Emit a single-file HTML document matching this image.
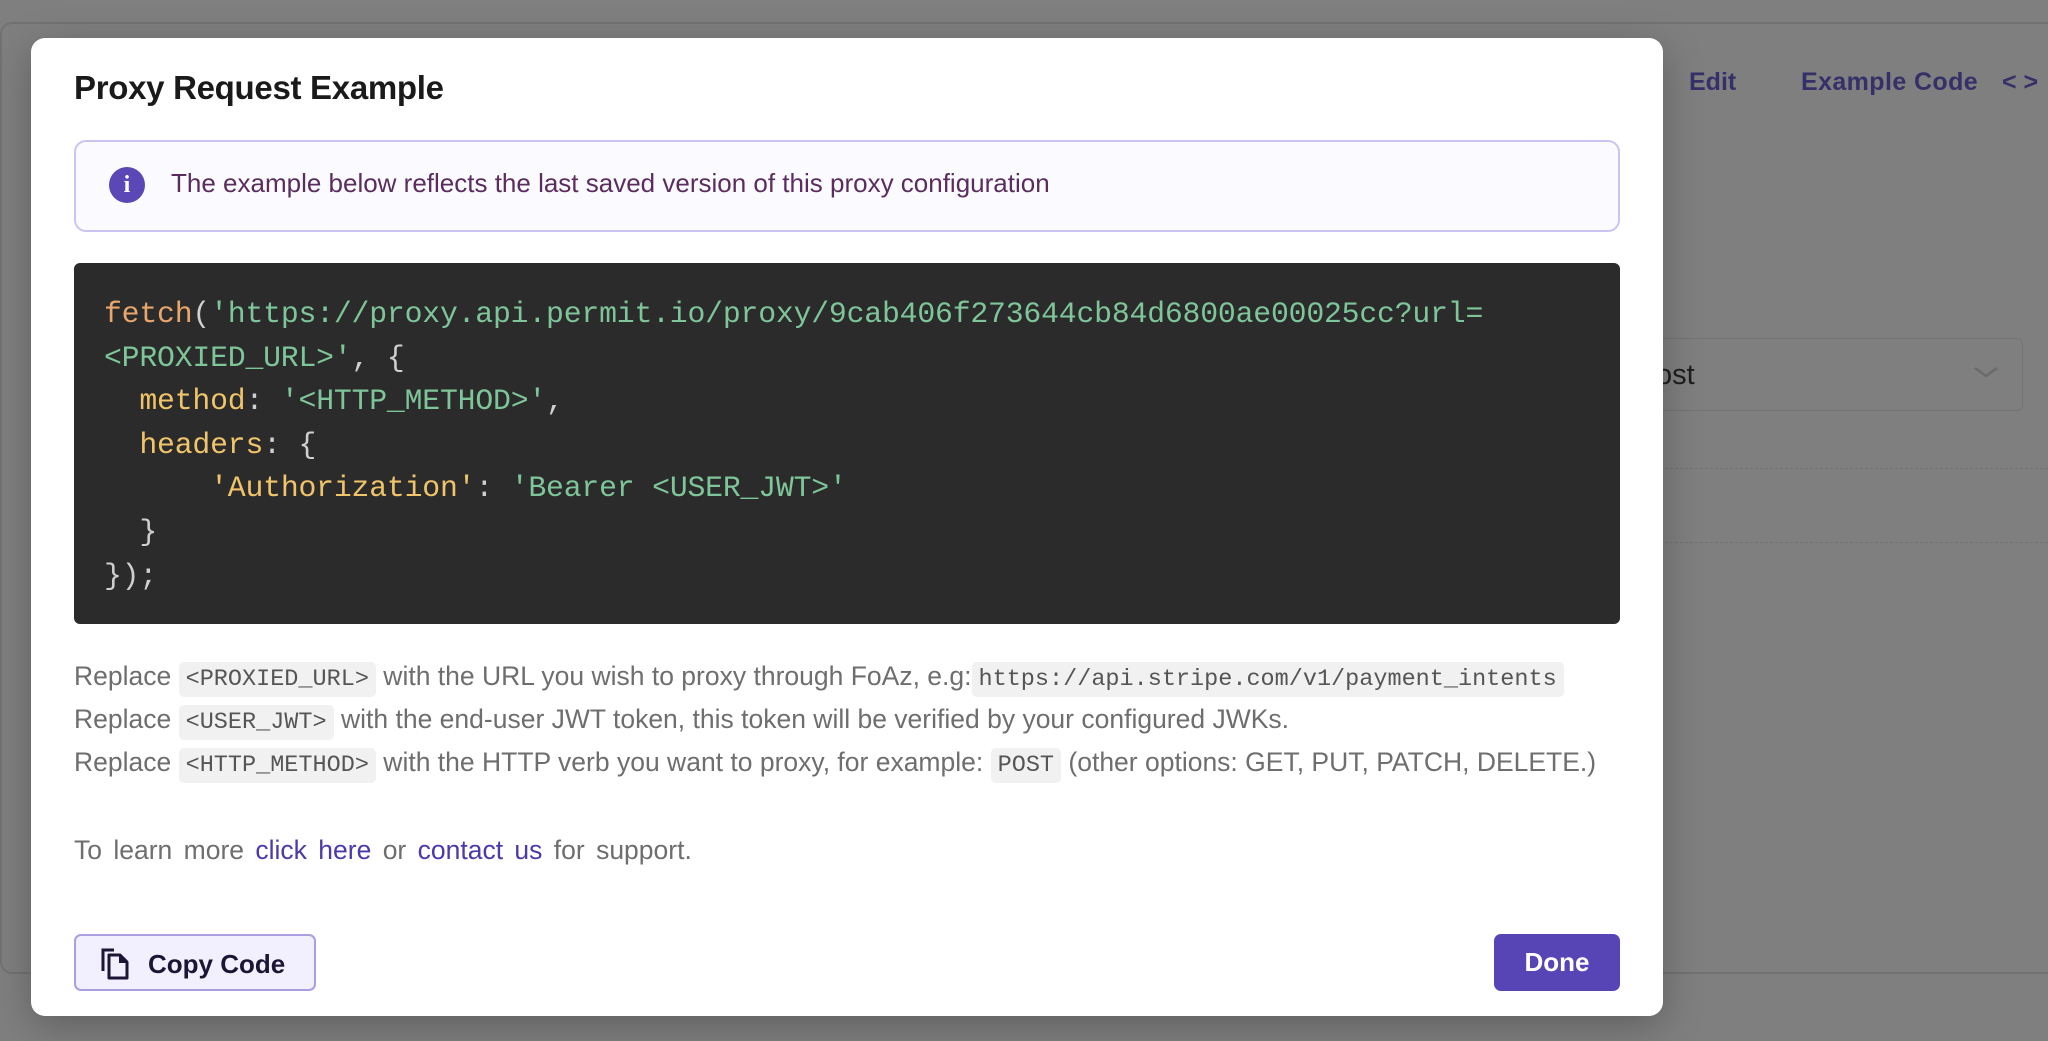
<!DOCTYPE html>
<html><head><meta charset="utf-8"><style>
*{margin:0;padding:0;box-sizing:border-box}
body{width:2048px;height:1041px;background:#7f7f7f;position:relative;overflow:hidden;font-family:"Liberation Sans",sans-serif}
.abs{position:absolute}
.modal{left:31px;top:38px;width:1632px;height:978px;background:#fff;border-radius:14px;box-shadow:0 10px 40px rgba(0,0,0,.25)}
.title{left:74px;top:69px;font-size:33px;font-weight:600;color:#1a1a1a;letter-spacing:-0.3px}
.info{left:74px;top:140px;width:1546px;height:92px;background:#fafaff;border:2px solid #cbc4f0;border-radius:12px}
.icon{left:109px;top:167px;width:36px;height:36px;border-radius:50%;background:#5b47b6;color:#fff;font-weight:bold;font-size:24px;text-align:center;line-height:36px;font-family:"Liberation Serif",serif}
.infotxt{left:171px;top:168px;font-size:26px;color:#5a2d5e}
.code{left:74px;top:263px;width:1546px;height:361px;background:#2b2b2b;border-radius:6px}
.code pre{position:absolute;left:30px;top:30px;font-family:"Liberation Mono",monospace;font-size:29.8px;line-height:43.6px;color:#cfcfcf;letter-spacing:-0.2px}
.o{color:#e8a56c}.y{color:#f0c46b}.g{color:#7ec699}
.rp{left:74px;font-size:26.5px;color:#6e6e6e;white-space:nowrap}
.rp code{font-family:"Liberation Mono",monospace;font-size:23.5px;background:#f1f1f1;border-radius:5px;padding:4px 7px;color:#555}
.lnk{color:#4b3aa8}
.btn1{left:74px;top:934px;width:242px;height:57px;background:#f2f0ff;border:2px solid #a99fe2;border-radius:7px}
.btn1 span{position:absolute;left:72px;top:13px;font-size:26px;font-weight:bold;color:#1c1535}
.done{left:1494px;top:934px;width:126px;height:57px;background:#5745b6;border-radius:7px;color:#fff;font-size:26px;font-weight:bold;text-align:center;line-height:57px}
.bgt{color:#353068;font-size:25px;font-weight:bold;top:68px}
</style></head><body>
<div class="abs" style="left:0;top:22px;width:2048px;height:952px;border-top:2px solid #727272;border-bottom:2px solid #727272;border-left:2px solid #727272;border-radius:12px 0 0 12px"></div>
<div class="abs bgt" style="left:1689px">Edit</div>
<div class="abs bgt" style="left:1801px;letter-spacing:0.4px">Example Code</div>
<div class="abs bgt" style="left:2002px">&lt; &gt;</div>
<div class="abs" style="left:1600px;top:338px;width:423px;height:73px;border:1.5px solid #747474;border-radius:6px"></div>
<div class="abs" style="left:1656px;top:359px;font-size:29px;color:#1e1e1e;font-family:'Liberation Sans',sans-serif">ost</div>
<svg class="abs" style="left:1972px;top:364px" width="28" height="16"><path d="M3 4 L14 12 L25 4" stroke="#6a6a6a" stroke-width="2.5" fill="none"/></svg>
<div class="abs" style="left:1600px;top:468px;width:448px;border-top:1.5px dashed #727272"></div>
<div class="abs" style="left:1600px;top:542px;width:448px;border-top:1.5px dashed #727272"></div>

<div class="abs modal"></div>
<div class="abs title">Proxy Request Example</div>
<div class="abs info"></div>
<div class="abs icon">i</div>
<div class="abs infotxt">The example below reflects the last saved version of this proxy configuration</div>
<div class="abs code"><pre><span class="o">fetch</span>(<span class="g">'https://proxy.api.permit.io/proxy/9cab406f273644cb84d6800ae00025cc?url=</span>
<span class="g">&lt;PROXIED_URL&gt;'</span>, {
  <span class="y">method</span>: <span class="g">'&lt;HTTP_METHOD&gt;'</span>,
  <span class="y">headers</span>: {
      <span class="y">'Authorization'</span>: <span class="g">'Bearer &lt;USER_JWT&gt;'</span>
  }
});</pre></div>
<div class="abs rp" style="top:661px">Replace <code>&lt;PROXIED_URL&gt;</code> with the URL you wish to proxy through FoAz, e.g:<code>https://api.stripe.com/v1/payment_intents</code></div>
<div class="abs rp" style="top:704px">Replace <code>&lt;USER_JWT&gt;</code> with the end-user JWT token, this token will be verified by your configured JWKs.</div>
<div class="abs rp" style="top:747px">Replace <code>&lt;HTTP_METHOD&gt;</code> with the HTTP verb you want to proxy, for example: <code>POST</code> (other options: GET, PUT, PATCH, DELETE.)</div>
<div class="abs rp" style="top:835px;word-spacing:4px">To learn more <span class="lnk">click here</span> or <span class="lnk">contact us</span> for support.</div>
<div class="abs btn1"><svg class="abs" style="left:24px;top:11px" width="32" height="34" viewBox="0 0 32 34"><path d="M3 24 V3 H14" stroke="#1c1535" stroke-width="3" fill="none"/><path d="M9 8 H20 L27 15 V31 H9 Z" stroke="#1c1535" stroke-width="3" fill="none" stroke-linejoin="round"/><path d="M19 8 V16 H27" fill="#1c1535"/></svg><span>Copy Code</span></div>
<div class="abs done">Done</div>
</body></html>
